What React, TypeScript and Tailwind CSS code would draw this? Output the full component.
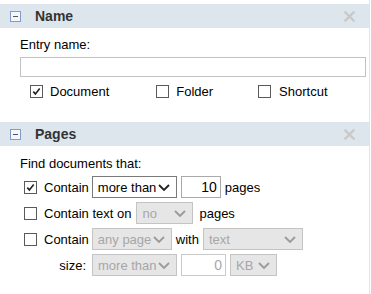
import React from 'react';
import clsx from 'clsx';

// collapsible section header with a minus toggle and a faded close cross
const SectionHeader = ({ title, className = '' }: { title: string; className?: string }) => (
    <div className={clsx('flex h-[24px] items-center bg-[#dde6ed]', className)}>
        <span className="ml-[10px] flex h-[11px] w-[11px] items-center justify-center border border-[#7f9ccc] bg-[#f4f7fb]">
            <span className="h-[1px] w-[5px] bg-[#555]" />
        </span>
        <span className="ml-[14px] text-[14px] font-bold text-[#333]">{title}</span>
        <svg className="ml-auto mr-[14px]" width="11" height="11" viewBox="0 0 11 11">
            <path d="M1.5 1.5 L9.5 9.5 M9.5 1.5 L1.5 9.5" stroke="#c9c9c9" strokeWidth="2.4" strokeLinecap="square" />
        </svg>
    </div>
)

const Check = ({ checked = false, className = '' }: { checked?: boolean; className?: string }) => (
    <span className={clsx('flex h-[13px] w-[13px] shrink-0 items-center justify-center border border-[#5a5a5a] bg-white', className)}>
        {checked && (
            <svg width="9" height="9" viewBox="0 0 9 9">
                <path d="M1.3 4.6 L3.4 6.9 L7.7 1.6" fill="none" stroke="#222" strokeWidth="1.6" />
            </svg>
        )}
    </span>
)

const Select = ({ label, disabled = false, className = '' }: { label: string; disabled?: boolean; className?: string }) => (
    <div
        className={clsx(
            'flex h-[22px] shrink-0 items-center justify-between whitespace-nowrap border pl-[5px] pr-[6px]',
            disabled ? 'border-[#c4c4c4] bg-[#e6e6e6] text-[#a6a6a6]' : 'border-[#7a7a7a] bg-white text-black',
            className
        )}
    >
        <span>{label}</span>
        <svg className="shrink-0" width="12" height="7" viewBox="0 0 12 7">
            <path d="M1 1 L6 6 L11 1" fill="none" stroke={disabled ? '#9a9a9a' : '#222'} strokeWidth="1.8" />
        </svg>
    </div>
)

const NumBox = ({ value, disabled = false, className = '' }: { value: string; disabled?: boolean; className?: string }) => (
    <div
        className={clsx(
            'flex h-[22px] shrink-0 items-center justify-end border bg-white pr-[3px] text-[14px]',
            disabled ? 'border-[#cacaca] text-[#a8a8a8]' : 'border-[#a9a9a9] text-black',
            className
        )}
    >
        {value}
    </div>
)

export default function App() {
    return (
        <div className="min-h-[294px] w-[370px] border-r border-[#e3e3e3] bg-white pt-[4px] font-['Liberation_Sans',Arial,sans-serif] text-[13px] leading-[15px] text-black">
            <SectionHeader title="Name" />
            <div className="pl-[20px] pt-[9px]">
                <div>Entry name:</div>
                <div className="mt-[5px] h-[20px] w-[346px] border border-[#c2c2c2] bg-white" />
                <div className="mt-[7px] flex items-center whitespace-nowrap">
                    <Check checked className="ml-[10px]" />
                    <span className="ml-[7px]">Document</span>
                    <Check className="ml-[47px]" />
                    <span className="ml-[7px]">Folder</span>
                    <Check className="ml-[45px]" />
                    <span className="ml-[8px]">Shortcut</span>
                </div>
            </div>

            <SectionHeader title="Pages" className="mt-[23px]" />
            <div className="pl-[20px] pt-[10px]">
                <div>Find documents that:</div>
                <div className="mt-[5px] flex flex-col gap-[4px] whitespace-nowrap">
                    <div className="flex h-[22px] items-center">
                        <Check checked className="ml-[4px]" />
                        <span className="ml-[7px]">Contain</span>
                        <Select label="more than" className="ml-[3px] w-[85px]" />
                        <NumBox value="10" className="ml-[4px] w-[40px]" />
                        <span className="ml-[4px]">pages</span>
                    </div>
                    <div className="flex h-[22px] items-center">
                        <Check className="ml-[4px]" />
                        <span className="ml-[7px]">Contain text on</span>
                        <Select label="no" disabled className="ml-[5px] w-[57px]" />
                        <span className="ml-[6px]">pages</span>
                    </div>
                    <div className="flex h-[22px] items-center">
                        <Check className="ml-[4px]" />
                        <span className="ml-[7px]">Contain</span>
                        <Select label="any page" disabled className="ml-[3px] w-[80px]" />
                        <span className="ml-[4px]">with</span>
                        <Select label="text" disabled className="ml-[4px] w-[100px]" />
                    </div>
                    <div className="flex h-[22px] items-center">
                        <span className="w-[67px] pr-[1px] text-right">size:</span>
                        <Select label="more than" disabled className="ml-[5px] w-[85px]" />
                        <NumBox value="0" disabled className="ml-[4px] w-[45px]" />
                        <Select label="KB" disabled className="ml-[4px] w-[47px]" />
                    </div>
                </div>
            </div>
        </div>
    )
}
